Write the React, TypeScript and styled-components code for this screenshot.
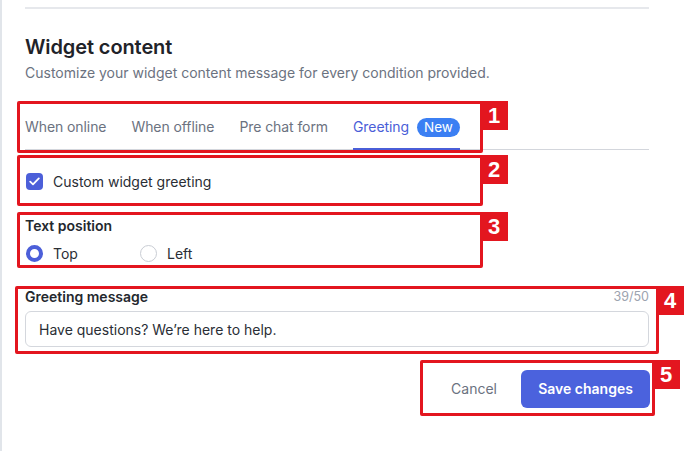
import React, { useState } from "react";
import styled, { createGlobalStyle } from "styled-components";

const GlobalStyle = createGlobalStyle`
  html, body { margin: 0; padding: 0; background: #ffffff; }
  body { font-family: Inter, "Noto Sans", "Liberation Sans", sans-serif; -webkit-font-smoothing: antialiased; }
  * { box-sizing: border-box; }
`;

const Page = styled.div`
  width: 697px;
  height: 451px;
  border-left: 2px solid #e1e5ea;
  overflow: hidden;
`;

const Content = styled.div`
  width: 647px;
  padding: 7px 0 0 23px;
  display: flex;
  flex-direction: column;
`;

const Divider = styled.div`
  height: 2px;
  background: #e6e8ec;
`;

const Title = styled.h2`
  margin: 24px 0 0;
  font-size: 20px;
  line-height: 28px;
  font-weight: 600;
  color: #1f2329;
  letter-spacing: -0.1px;
`;

const Subtitle = styled.p`
  margin: 2px 0 0;
  font-size: 14px;
  line-height: 20px;
  color: #6b7280;
`;

const Annotated = styled.div`
  position: relative;
`;

const Highlight = styled.div<{ $top: number; $left: number; $width: number; $height: number }>`
  position: absolute;
  top: ${(p) => p.$top}px;
  left: ${(p) => p.$left}px;
  width: ${(p) => p.$width}px;
  height: ${(p) => p.$height}px;
  border: 3px solid #e3161f;
  border-radius: 2px;
  pointer-events: none;
`;

const Tag = styled.span`
  position: absolute;
  top: -3px;
  left: 100%;
  width: 28px;
  height: 29px;
  background: #e3161f;
  color: #ffffff;
  font-family: "Liberation Sans", Arial, sans-serif;
  font-weight: 700;
  font-size: 22px;
  line-height: 29px;
  text-align: center;
`;

const TabBar = styled.div`
  margin-top: 21px;
  display: flex;
  gap: 25px;
  border-bottom: 1px solid #d3d6dc;
`;

const Tab = styled.button<{ $active?: boolean }>`
  all: unset;
  display: flex;
  align-items: center;
  gap: 8px;
  padding: 13px 0 11px;
  margin-bottom: -1px;
  font-size: 14px;
  line-height: 20px;
  letter-spacing: -0.08px;
  color: ${(p) => (p.$active ? "#4a5ed8" : "#6b7280")};
  border-bottom: 2px solid ${(p) => (p.$active ? "#4a5ed8" : "transparent")};
  cursor: pointer;
`;

const Badge = styled.span`
  display: inline-block;
  height: 19px;
  padding: 0 7px;
  border-radius: 10px;
  background: #3b7ff3;
  color: #ffffff;
  font-size: 13.5px;
  line-height: 19px;
  letter-spacing: 0;
`;

const CheckRow = styled.label`
  margin-top: 21px;
  display: flex;
  align-items: center;
  gap: 10px;
  height: 20px;
  padding-left: 1px;
  font-size: 14px;
  color: #2a2e35;
  cursor: pointer;
`;

const CheckBox = styled.span<{ $checked: boolean }>`
  width: 17px;
  height: 17px;
  border-radius: 4px;
  background: ${(p) => (p.$checked ? "#4c5fd9" : "#ffffff")};
  border: ${(p) => (p.$checked ? "none" : "1px solid #c9cdd4")};
  display: flex;
  align-items: center;
  justify-content: center;
`;

const FieldLabel = styled.div`
  font-size: 14px;
  line-height: 18px;
  font-weight: 600;
  color: #24282e;
`;

const PositionGroup = styled.div`
  margin-top: 26px;
`;

const RadioRow = styled.div`
  margin-top: 8px;
  display: flex;
  height: 20px;
  padding-left: 1px;
`;

const RadioOption = styled.label`
  width: 114px;
  display: flex;
  align-items: center;
  gap: 10px;
  font-size: 14px;
  color: #2a2e35;
  cursor: pointer;
`;

const RadioDot = styled.span<{ $checked: boolean }>`
  width: 17px;
  height: 17px;
  border-radius: 50%;
  border: ${(p) => (p.$checked ? "4.5px solid #4c5fd9" : "1px solid #c9cdd4")};
  background: #ffffff;
`;

const GreetingGroup = styled.div`
  margin-top: 25px;
`;

const LabelRow = styled.div`
  display: flex;
  justify-content: space-between;
  align-items: center;
`;

const Counter = styled.span`
  font-size: 12.5px;
  line-height: 18px;
  color: #9ca3af;
`;

const TextInput = styled.input`
  margin-top: 5px;
  width: 100%;
  height: 36px;
  padding: 0 13px;
  border: 1px solid #d4d7dd;
  border-radius: 6px;
  font-family: inherit;
  font-size: 14px;
  color: #2a2e35;
  outline: none;
  background: #ffffff;
`;

const Actions = styled.div`
  margin-top: 23px;
  margin-right: -1px;
  display: flex;
  justify-content: flex-end;
`;

const ActionGroup = styled.div`
  position: relative;
  display: flex;
  align-items: center;
  gap: 8px;
`;

const GhostButton = styled.button`
  all: unset;
  padding: 0 16px;
  height: 38px;
  line-height: 38px;
  font-size: 14px;
  color: #6b7280;
  cursor: pointer;
`;

const PrimaryButton = styled.button`
  all: unset;
  height: 38px;
  width: 129px;
  text-align: center;
  line-height: 38px;
  border-radius: 6px;
  background: #4b62dd;
  color: #ffffff;
  font-size: 14px;
  font-weight: 600;
  cursor: pointer;
`;

const Mark = ({ n, top, left, width, height }: { n: number; top: number; left: number; width: number; height: number }) => (
  <Highlight $top={top} $left={left} $width={width} $height={height}>
    <Tag>{n}</Tag>
  </Highlight>
);

const tabs = ["When online", "When offline", "Pre chat form", "Greeting"];

export default function App() {
  const [active, setActive] = useState(3);
  const [checked, setChecked] = useState(true);
  const [pos, setPos] = useState<"top" | "left">("top");
  const [msg, setMsg] = useState("Have questions? We\u2019re here to help.");

  return (
    <>
      <GlobalStyle />
      <Page>
        <Content>
          <Divider />
          <Title>Widget content</Title>
          <Subtitle>Customize your widget content message for every condition provided.</Subtitle>

          <Annotated>
            <TabBar>
              {tabs.map((t, i) => (
                <Tab key={t} $active={i === active} onClick={() => setActive(i)}>
                  {t}
                  {t === "Greeting" && <Badge>New</Badge>}
                </Tab>
              ))}
            </TabBar>
            <Mark n={1} top={18} left={-8} width={466} height={52} />
          </Annotated>

          <Annotated>
            <CheckRow onClick={() => setChecked(!checked)}>
              <CheckBox $checked={checked}>
                {checked && (
                  <svg width="11" height="9" viewBox="0 0 11 9" fill="none">
                    <path d="M1.2 4.6 L4 7.3 L9.8 1.4" stroke="#fff" strokeWidth="1.8" strokeLinecap="round" strokeLinejoin="round" />
                  </svg>
                )}
              </CheckBox>
              Custom widget greeting
            </CheckRow>
            <Mark n={2} top={5} left={-8} width={466} height={51} />
          </Annotated>

          <Annotated>
            <PositionGroup>
              <FieldLabel>Text position</FieldLabel>
              <RadioRow>
                <RadioOption onClick={() => setPos("top")}>
                  <RadioDot $checked={pos === "top"} />
                  Top
                </RadioOption>
                <RadioOption onClick={() => setPos("left")}>
                  <RadioDot $checked={pos === "left"} />
                  Left
                </RadioOption>
              </RadioRow>
            </PositionGroup>
            <Mark n={3} top={21} left={-8} width={466} height={56} />
          </Annotated>

          <Annotated>
            <GreetingGroup>
              <LabelRow>
                <FieldLabel>Greeting message</FieldLabel>
                <Counter>39/50</Counter>
              </LabelRow>
              <TextInput value={msg} maxLength={50} onChange={(e) => setMsg(e.target.value)} />
            </GreetingGroup>
            <Mark n={4} top={23} left={-10} width={644} height={68} />
          </Annotated>

          <Actions>
            <ActionGroup>
              <GhostButton>Cancel</GhostButton>
              <PrimaryButton>Save changes</PrimaryButton>
              <Mark n={5} top={-10} left={-15} width={235} height={56} />
            </ActionGroup>
          </Actions>
        </Content>
      </Page>
    </>
  );
}
